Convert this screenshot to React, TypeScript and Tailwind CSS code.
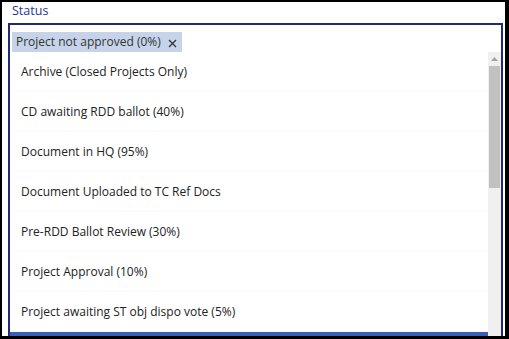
const items = [
  "Archive (Closed Projects Only)",
  "CD awaiting RDD ballot (40%)",
  "Document in HQ (95%)",
  "Document Uploaded to TC Ref Docs",
  "Pre-RDD Ballot Review (30%)",
  "Project Approval (10%)",
  "Project awaiting ST obj dispo vote (5%)",
];

export default function App() {
  return (
    <div className="w-[509px] h-[339px] overflow-hidden bg-white border-black border-l-2 border-t-2 border-r-4 border-b-[3px] flex flex-col font-['Open_Sans',sans-serif]">
      {/* label */}
      <div className="h-[21px] pl-[10px] text-[12.5px] leading-[17px] text-[#26349a]">Status</div>

      {/* combo box */}
      <div className="flex-1 ml-[6px] mr-[2px] border-2 border-b-0 border-[#1f2a7a] flex flex-col min-h-0">
        <div className="pl-[2px] pt-[3px] h-[27px]">
          <div className="inline-flex items-center h-[20px] pl-[4px] pr-[5px] bg-[#c6d3e9] text-[12px] text-[#333]">
            <span>Project not approved (0%)</span>
            <svg width="9" height="9" viewBox="0 0 9 9" className="ml-[7px] mt-[3px]">
              <path d="M1 1L8 8M8 1L1 8" stroke="#333" strokeWidth="1.3" />
            </svg>
          </div>
        </div>

        {/* dropdown list */}
        <div className="flex flex-1 min-h-0">
          <div className="flex-1 flex flex-col">
            {items.map((t) => (
              <div
                key={t}
                className="h-[40px] shrink-0 flex items-center pl-[11px] text-[12px] text-[#222] border-b border-[#fafafa]"
              >
                {t}
              </div>
            ))}
            <div className="h-[40px] shrink-0 bg-[#3a5fb5]" />
          </div>

          {/* scrollbar */}
          <div className="w-[13px] bg-[#f0f0f0] flex flex-col items-center">
            <div className="h-[14px] flex items-center justify-center">
              <svg width="7" height="4" viewBox="0 0 7 4">
                <path d="M0 4L3.5 0L7 4Z" fill="#a3a3a3" />
              </svg>
            </div>
            <div className="w-[11px] h-[122px] bg-[#c1c1c1]" />
          </div>
        </div>
      </div>
    </div>
  );
}
